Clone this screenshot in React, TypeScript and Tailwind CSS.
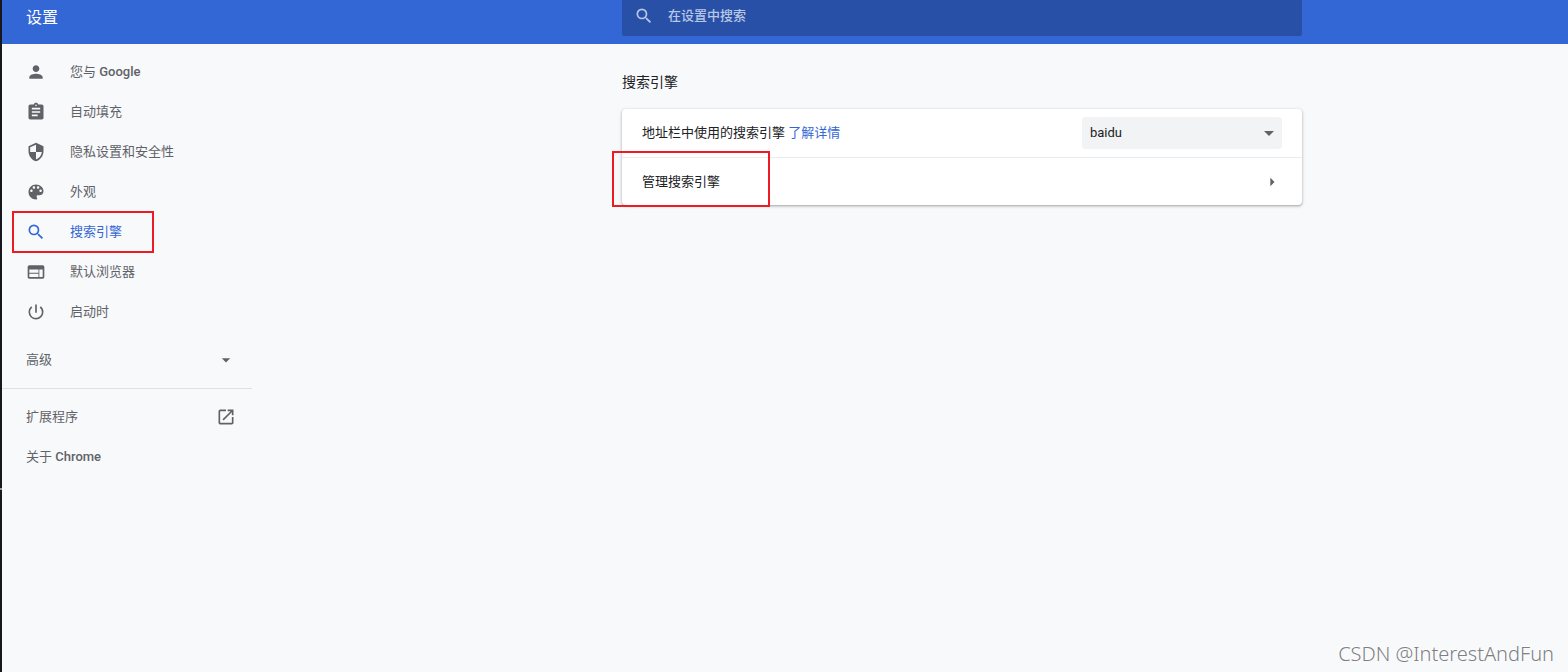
import type { IconType } from "react-icons";
import {
  MdArrowDropDown,
  MdArrowRight,
  MdAssignment,
  MdOpenInNew,
  MdPerson,
  MdPowerSettingsNew,
  MdSearch,
  MdSecurity,
  MdWeb,
} from "react-icons/md";

type IconProps = { className?: string };
type MenuItem = {
  label: string;
  latin?: string;
  icon: IconType | ((props: IconProps) => React.ReactNode);
  active?: boolean;
};

function PaletteIcon({ className }: IconProps) {
  return (
    <svg viewBox="0 0 24 24" fill="currentColor" className={className}>
      <path d="M12 3c-4.97 0-9 4.03-9 9s4.03 9 9 9c.83 0 1.5-.67 1.5-1.5 0-.39-.15-.74-.39-1.01-.23-.26-.38-.61-.38-.99 0-.83.67-1.5 1.5-1.5H16c2.76 0 5-2.24 5-5 0-4.42-4.03-8-9-8zm-5.5 9c-.83 0-1.5-.67-1.5-1.5S5.67 9 6.5 9 8 9.67 8 10.5 7.33 12 6.5 12zm3-4C8.67 8 8 7.33 8 6.5S8.67 5 9.5 5s1.5.67 1.5 1.5S10.33 8 9.5 8zm5 0c-.83 0-1.5-.67-1.5-1.5S13.67 5 14.5 5s1.5.67 1.5 1.5S15.33 8 14.5 8zm3 4c-.83 0-1.5-.67-1.5-1.5S16.67 9 17.5 9s1.5.67 1.5 1.5-.67 1.5-1.5 1.5z" />
    </svg>
  );
}

const menuItems: MenuItem[] = [
  { label: "您与", latin: "Google", icon: MdPerson },
  { label: "自动填充", icon: MdAssignment },
  { label: "隐私设置和安全性", icon: MdSecurity },
  { label: "外观", icon: PaletteIcon },
  { label: "搜索引擎", icon: MdSearch, active: true },
  { label: "默认浏览器", icon: MdWeb },
  { label: "启动时", icon: MdPowerSettingsNew },
];

function Header() {
  return (
    <header className="flex h-11 bg-[#3367d6] text-white">
      <h1 className="flex h-9 w-[250px] shrink-0 items-center pl-6 text-base">设置</h1>
      <div className="flex-1" />
      <label className="flex h-9 w-full max-w-[680px] items-center gap-3.5 rounded-b-xs bg-[#2850a7] pb-1 pl-3">
        <MdSearch className="size-5 shrink-0 text-[#b8c7e6]" />
        <input
          type="search"
          aria-label="在设置中搜索"
          placeholder="在设置中搜索"
          className="min-w-0 flex-1 bg-transparent font-medium outline-none placeholder:text-[#b8c7e6]"
        />
      </label>
      <div className="w-[266px] shrink" />
    </header>
  );
}

function Sidebar() {
  return (
    <nav className="w-[250px] shrink-0 pt-2 text-[#5f6368]">
      <ul>
        {menuItems.map(({ label, latin, icon: Icon, active }) => (
          <li key={label} className="relative">
            <a
              href="#"
              className={
                active
                  ? "flex h-10 items-center gap-6 pl-6 text-[#3367d6]"
                  : "flex h-10 items-center gap-6 pl-6"
              }
            >
              <Icon className="size-5" />
              <span>
                {label}
                {latin && <span className="font-medium"> {latin}</span>}
              </span>
            </a>
            {active && (
              <div className="pointer-events-none absolute -top-px left-2.5 h-[42px] w-[142px] border-2 border-[#ed1c24]" />
            )}
          </li>
        ))}
      </ul>
      <button
        type="button"
        className="mt-2 flex h-10 w-full items-center justify-between pr-4 pl-6"
      >
        <span>高级</span>
        <MdArrowDropDown className="size-5" />
      </button>
      <div className="mt-2 border-t border-[#e0e1e4] pt-2">
        <a href="#" className="flex h-10 items-center justify-between pr-4 pl-6">
          <span>扩展程序</span>
          <MdOpenInNew className="size-5" />
        </a>
        <a href="#" className="flex h-10 items-center pl-6">
          <span>
            关于<span className="font-medium"> Chrome</span>
          </span>
        </a>
      </div>
    </nav>
  );
}

function SearchEngineSection() {
  return (
    <main className="w-full max-w-[680px] pt-7 text-[#202124]">
      <h2 className="text-sm leading-5">搜索引擎</h2>
      <section className="mt-[17px] rounded bg-white shadow-[0_1px_2px_rgba(60,64,67,0.3),0_1px_3px_1px_rgba(60,64,67,0.15)]">
        <div className="flex h-12 items-center justify-between px-5">
          <div>
            <label htmlFor="engine">地址栏中使用的搜索引擎</label>{" "}
            <a href="#" className="text-[#3367d6]">
              了解详情
            </a>
          </div>
          <div className="relative w-[200px]">
            <select
              id="engine"
              className="h-8 w-full appearance-none rounded bg-[#f1f3f4] px-2"
            >
              <option>baidu</option>
            </select>
            <svg
              viewBox="0 0 10 5"
              className="pointer-events-none absolute top-3.5 right-2 h-[5px] w-2.5 fill-[#5f6368]"
            >
              <path d="M0 0h10L5 5z" />
            </svg>
          </div>
        </div>
        <div className="relative h-12 border-t border-[#ebecee]">
          <button
            type="button"
            className="flex h-full w-full items-center justify-between px-5"
          >
            <span>管理搜索引擎</span>
            <MdArrowRight className="size-5 text-[#5f6368]" />
          </button>
          <div className="pointer-events-none absolute -top-[7px] -left-2.5 h-14 w-[158px] border-2 border-[#ed1c24]" />
        </div>
      </section>
    </main>
  );
}

export default function App() {
  return (
    <div className="relative min-h-screen border-l-2 border-[#17181d] bg-[#f8f9fb] font-['Roboto','Noto_Sans_CJK_SC',sans-serif] text-[13px] leading-5">
      <Header />
      <div className="flex">
        <Sidebar />
        <div className="flex-1" />
        <SearchEngineSection />
        <div className="w-[266px] shrink" />
      </div>
      <div className="absolute top-[488px] -left-0.5 h-0.5 w-0.5 bg-[#9a9a9a]" />
      <div className="absolute right-3.5 bottom-1 font-['Noto_Sans',sans-serif] text-xl leading-7 font-light text-[#7e7f82] [text-shadow:-1px_-1px_0_#fff]">
        CSDN @InterestAndFun
      </div>
    </div>
  );
}
